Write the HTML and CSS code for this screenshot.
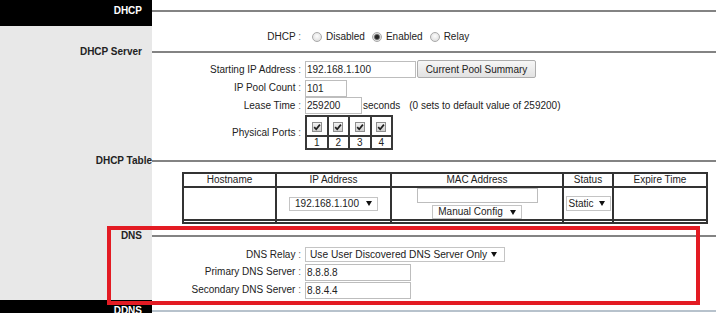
FILE: index.html
```html
<!DOCTYPE html>
<html>
<head>
<meta charset="utf-8">
<link rel="stylesheet" href="styles.css">
</head>
<body>
<div class="page">
  <div class="shead dark"><div class="slabel">DHCP</div><div class="rule"></div></div>

  <div class="frow r-radio">
    <div class="flabel">DHCP <span class="colon">:</span></div>
    <label class="opt"><input type="radio" name="dhcp">Disabled</label>
    <label class="opt"><input type="radio" name="dhcp" checked>Enabled</label>
    <label class="opt"><input type="radio" name="dhcp">Relay</label>
  </div>

  <div class="shead"><div class="slabel">DHCP Server</div><div class="rule"></div></div>

  <div class="frow r-start">
    <div class="flabel">Starting IP Address <span class="colon">:</span></div>
    <input class="txt w-start" value="192.168.1.100">
    <button class="btn">Current Pool Summary</button>
  </div>
  <div class="frow r-pool">
    <div class="flabel">IP Pool Count <span class="colon">:</span></div>
    <input class="txt w-pool" value="101">
  </div>
  <div class="frow r-lease">
    <div class="flabel">Lease Time <span class="colon">:</span></div>
    <input class="txt w-lease" value="259200">
    <span class="unit">seconds</span>
    <span class="note">(0 sets to default value of 259200)</span>
  </div>
  <div class="frow r-ports">
    <div class="flabel">Physical Ports <span class="colon">:</span></div>
    <table class="ports">
      <tr class="chkrow">
        <td><span class="chk"><svg viewBox="0 0 8 8" width="8" height="8"><path d="M1.2 4.2 L3.2 6.3 L6.9 1.6" fill="none" stroke="#1e1e1e" stroke-width="1.7"/></svg></span></td>
        <td><span class="chk"><svg viewBox="0 0 8 8" width="8" height="8"><path d="M1.2 4.2 L3.2 6.3 L6.9 1.6" fill="none" stroke="#1e1e1e" stroke-width="1.7"/></svg></span></td>
        <td><span class="chk"><svg viewBox="0 0 8 8" width="8" height="8"><path d="M1.2 4.2 L3.2 6.3 L6.9 1.6" fill="none" stroke="#1e1e1e" stroke-width="1.7"/></svg></span></td>
        <td><span class="chk"><svg viewBox="0 0 8 8" width="8" height="8"><path d="M1.2 4.2 L3.2 6.3 L6.9 1.6" fill="none" stroke="#1e1e1e" stroke-width="1.7"/></svg></span></td>
      </tr>
      <tr class="numrow"><td>1</td><td>2</td><td>3</td><td>4</td></tr>
    </table>
  </div>

  <div class="shead t-table"><div class="slabel flush">DHCP Table</div><div class="rule"></div></div>

  <table class="dtable">
    <thead>
      <tr><th class="c1">Hostname</th><th class="c2">IP Address</th><th class="c3">MAC Address</th><th class="c4">Status</th><th>Expire Time</th></tr>
    </thead>
    <tbody>
      <tr class="drow">
        <td></td>
        <td><span class="sel">192.168.1.100<i class="caret"></i></span></td>
        <td class="mac"><input class="txt mac-in" value=""><span class="sel sel-manual">Manual Config<i class="caret"></i></span></td>
        <td><span class="sel sel-static">Static<i class="caret"></i></span></td>
        <td></td>
      </tr>
      <tr class="gaprow"><td></td><td></td><td></td><td></td><td></td></tr>
    </tbody>
  </table>

  <div class="shead t-dns"><div class="slabel">DNS</div><div class="rule"></div></div>

  <div class="frow r-relay">
    <div class="flabel">DNS Relay <span class="colon">:</span></div>
    <span class="sel sel-dns">Use User Discovered DNS Server Only<i class="caret"></i></span>
  </div>
  <div class="frow r-dns">
    <div class="flabel">Primary DNS Server <span class="colon">:</span></div>
    <input class="txt w-dns" value="8.8.8.8">
  </div>
  <div class="frow r-dns">
    <div class="flabel">Secondary DNS Server <span class="colon">:</span></div>
    <input class="txt w-dns" value="8.8.4.4">
  </div>

  <div class="shead dark t-next"><div class="slabel">DDNS</div><div class="rule light"></div></div>

  <div class="highlight"></div>
</div>
</body>
</html>
```

FILE: styles.css
```css
* { box-sizing: border-box; }
html, body { margin: 0; padding: 0; }
body {
  font-family: "Liberation Sans", Arial, sans-serif;
  font-size: 10px;
  color: #222;
  background: #fff;
}
.page {
  position: relative;
  width: 718px;
  height: 313px;
  overflow: hidden;
  background: linear-gradient(to right, #e8e8e8 0, #e8e8e8 152px, #fff 152px);
}

/* section headers */
.shead { display: flex; align-items: center; height: 12px; }
.slabel {
  width: 152px;
  flex: none;
  padding-right: 10px;
  text-align: right;
  font-weight: bold;
  line-height: 12px;
  white-space: nowrap;
  color: #222;
}
.slabel.flush { padding-right: 0; }
.rule { flex: 1; height: 2px; background: #838383; margin-right: 2px; }
.rule.light { background: #b7c2cc; }
.shead.dark { height: 26px; align-items: flex-start; }
.shead.dark .slabel { height: 26px; background: #000; color: #fff; padding-top: 5px; }
.shead.dark .rule { margin-top: 10px; }
.t-table { margin-top: 5px; }
.t-dns { margin-top: 6px; }
.t-next { margin-top: 1px; }
.t-next .slabel { padding-top: 8px; }
.t-next .rule { margin-top: 11px; }

/* form rows */
.frow { display: flex; align-items: flex-start; height: 18px; }
.flabel {
  width: 305px;
  flex: none;
  padding-right: 4px;
  text-align: right;
  white-space: nowrap;
  line-height: 18px;
}
.colon { color: #6f6f6f; }

.r-radio { margin-top: 2px; }
.opt { display: flex; align-items: center; height: 18px; line-height: 18px; }
.opt input {
  -webkit-appearance: none;
  appearance: none;
  width: 10px;
  height: 10px;
  margin: 0 4px 0 7px;
  border-radius: 50%;
  border: 1px solid #a9a9a9;
  background: radial-gradient(circle at 50% 40%, #fdfdfd 0, #e6e6e6 60%, #d6d6d6 100%);
}
.opt input:checked {
  background: radial-gradient(circle, #1f1f1f 0, #2a2a2a 1.8px, #8a8a8a 2.8px, #e2e2e2 3.6px);
}

.txt {
  height: 17px;
  border: 1px solid #bdbdbd;
  background: #fff;
  padding: 0 1px;
  font-family: "Liberation Sans", Arial, sans-serif;
  font-size: 10px;
  color: #222;
  margin: 0;
  outline: none;
}
.btn {
  height: 18px;
  width: 119px;
  margin: 0 0 0 1px;
  padding: 0;
  border: 1px solid #adadad;
  border-radius: 2px;
  background: linear-gradient(#f6f6f6, #e2e2e2);
  font-family: "Liberation Sans", Arial, sans-serif;
  font-size: 10px;
  color: #222;
}

.r-start { margin-top: 2px; height: 19px; }
.r-start .flabel { line-height: 19px; }
.r-start .txt { margin-top: 1px; }
.w-start { width: 111px; }

.r-pool .txt { margin-top: 1px; }
.w-pool { width: 42px; }

.r-lease { height: 18px; }
.r-lease .flabel { line-height: 17px; }
.w-lease { width: 57px; }
.unit { margin-left: 1px; line-height: 17px; }
.note { margin-left: 9px; line-height: 17px; }

.r-ports { height: 35px; align-items: center; }
.ports {
  border-collapse: collapse;
  table-layout: fixed;
  width: 88px;
  margin: 0;
}
.ports td {
  border: 2px solid #383838;
  padding: 0;
  text-align: center;
  line-height: 11px;
}
.ports .chkrow td { height: 20px; }
.ports .numrow td { height: 13px; }
.chk {
  display: inline-block;
  width: 10px;
  height: 10px;
  border: 1px solid #8e8e8e;
  background: linear-gradient(#f2f2f2, #cfcfcf);
  vertical-align: middle;
}
.chk svg { display: block; }

/* DHCP table */
.dtable {
  margin: 5px 0 0 182px;
  width: 526px;
  table-layout: fixed;
  border-collapse: separate;
  border-spacing: 0;
  border: 1px solid #333;
}
.dtable th, .dtable td {
  border: 1px solid #333;
  padding: 0;
  text-align: center;
  vertical-align: middle;
  font-weight: normal;
  line-height: 12px;
}
.dtable th { box-sizing: border-box; }
.c1 { width: 93px; }
.c2 { width: 115px; }
.c3 { width: 172px; }
.c4 { width: 50px; }
.drow td { height: 31px; }
.gaprow td { height: 3px; line-height: 1px; font-size: 1px; }
.dtable td.mac { vertical-align: top; }
.mac-in { display: block; width: 121px; height: 15px; margin: 0 auto; }
.sel-manual { margin-top: 2px; height: 13px; }

.sel {
  display: inline-flex;
  align-items: center;
  height: 14px;
  border: 1px solid #c4c4c4;
  background: #fff;
  padding: 0 5px;
  line-height: 12px;
  white-space: nowrap;
  vertical-align: middle;
}
.caret {
  display: inline-block;
  width: 0;
  height: 0;
  border-left: 3px solid transparent;
  border-right: 3px solid transparent;
  border-top: 5px solid #111;
  margin-left: 7px;
}
.sel-static { width: 45px; height: 15px; padding: 0 0 0 2px; }
.sel-static .caret { margin-left: 5px; }

.r-relay { margin-top: 4px; height: 17px; }
.r-relay .flabel { line-height: 17px; }
.sel-dns { width: 200px; height: 15px; margin-top: 1px; padding: 0 7px 0 4px; font-size: 10.2px; }
.sel-dns .caret { margin-left: auto; }
.r-dns .txt { margin-top: 1px; }
.w-dns { width: 106px; }

/* annotation overlay */
.highlight {
  position: absolute;
  left: 107px;
  top: 226px;
  width: 593px;
  height: 79px;
  border: 4px solid #e31b23;
  pointer-events: none;
}
```
